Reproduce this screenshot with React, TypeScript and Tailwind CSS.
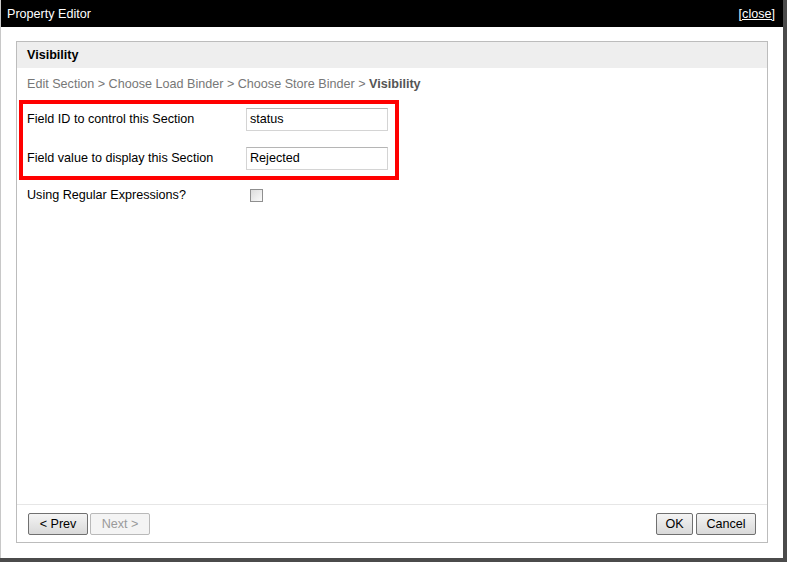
export default function App() {
  return (
    <div className="w-[787px] h-[562px] bg-[#4b4b4b] overflow-hidden" style={{ fontFamily: '"Liberation Sans", Arial, sans-serif' }}>
      <div className="w-[783px] h-[558px] bg-white flex flex-col border-l border-[#c8c8c8]">
        {/* title bar */}
        <div className="h-[27px] bg-black flex items-center justify-between pl-[6px] pr-[8px] pt-[2px] text-[12.6px] text-white">
          <span>Property Editor</span>
          <a href="#" className="underline text-white">[close]</a>
        </div>

        <div className="flex-1 px-[15px] pt-[14px] pb-[15px] flex">
          <div className="flex-1 border border-[#bcbcbc] flex flex-col">
            <div className="h-[26px] bg-[#eeeeee] flex items-center px-[10px] text-[12.6px] font-bold text-black">
              Visibility
            </div>
            <div className="px-[10px] pt-[7px] text-[12.6px] text-[#777]">
              Edit Section &gt; Choose Load Binder &gt; Choose Store Binder &gt;{" "}
              <span className="font-bold text-[#555]">Visibility</span>
            </div>

            <div className="mt-[6px] ml-[2px] w-[380px] border-[4px] border-[#ff0000] px-[4px] pt-[4px] pb-[6px] flex flex-col gap-[16px]">
              <div className="flex items-start">
                <span className="w-[219px] text-[12.6px] text-black pt-[2px]">Field ID to control this Section</span>
                <div className="w-[142px] h-[23px] border border-[#d4d4d4] border-t-[#b5b5b5] flex items-center px-[3px] pt-[1px] text-[12.6px] text-black">status</div>
              </div>
              <div className="flex items-start">
                <span className="w-[219px] text-[12.6px] text-black pt-[2px]">Field value to display this Section</span>
                <div className="w-[142px] h-[23px] border border-[#d4d4d4] border-t-[#b5b5b5] flex items-center px-[3px] pt-[1px] text-[12.6px] text-black">Rejected</div>
              </div>
            </div>

            <div className="flex items-center px-[10px] mt-[6px]">
              <span className="w-[223px] text-[12.6px] text-black">Using Regular Expressions?</span>
              <span className="w-[13px] h-[13px] border border-[#8f8f8f] bg-gradient-to-br from-[#dcdcdc] to-[#fafafa]" />
            </div>

            <div className="flex-1" />

            <div className="border-t border-[#e6e6e6] h-[38px] flex items-center justify-between px-[11px]">
              <div className="flex gap-[2px]">
                <button className="w-[60px] h-[22px] rounded-[2px] border border-[#707070] bg-gradient-to-b from-[#f4f4f4] to-[#d9d9d9] pt-[1px] text-[12.6px] text-black">&lt; Prev</button>
                <button className="w-[60px] h-[22px] rounded-[2px] border border-[#b9b9b9] bg-[#f4f4f4] pt-[1px] text-[12.6px] text-[#9a9a9a]">Next &gt;</button>
              </div>
              <div className="flex gap-[3px]">
                <button className="w-[37px] h-[22px] rounded-[2px] border border-[#707070] bg-gradient-to-b from-[#f4f4f4] to-[#d9d9d9] pt-[1px] text-[12.6px] text-black">OK</button>
                <button className="w-[60px] h-[22px] rounded-[2px] border border-[#707070] bg-gradient-to-b from-[#f4f4f4] to-[#d9d9d9] pt-[1px] text-[12.6px] text-black">Cancel</button>
              </div>
            </div>
          </div>
        </div>
      </div>
    </div>
  );
}
